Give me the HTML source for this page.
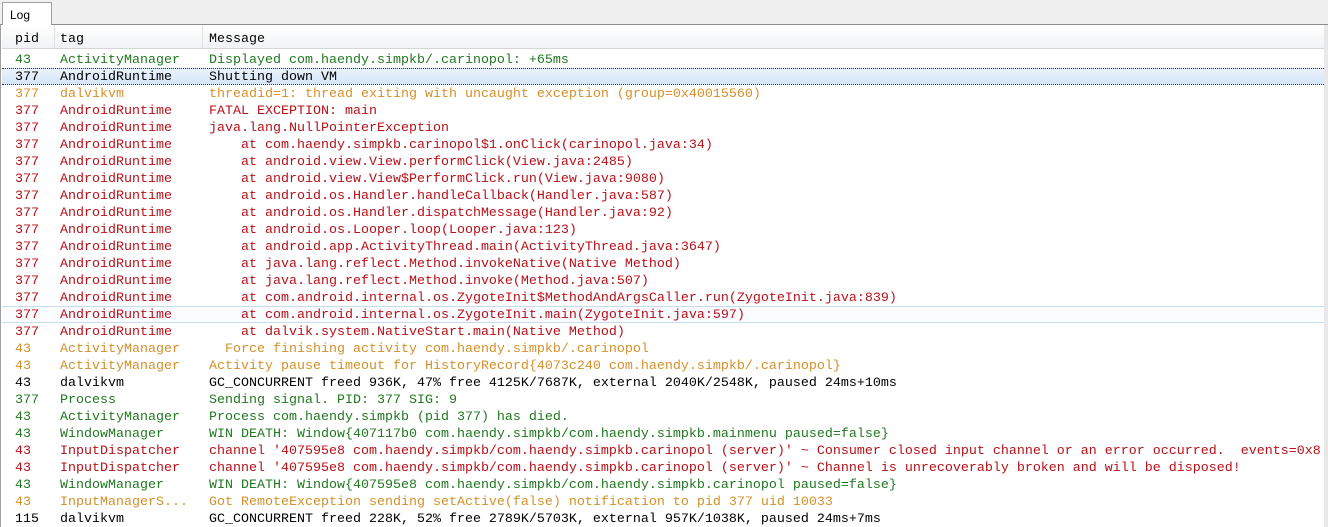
<!DOCTYPE html>
<html><head><style>
body{margin:0;width:1328px;height:527px;overflow:hidden;background:#fff;font-family:"Liberation Mono",monospace;font-size:13.33px;}
.strip{position:absolute;left:0;top:0;width:1328px;height:24px;background:#f0f0f0;border-bottom:1px solid #8c8c8c;}
.tab{position:absolute;left:2px;top:2px;width:50px;height:23px;background:#fff;border:1px solid #a0a0a0;border-bottom:none;font-family:"Liberation Sans",sans-serif;font-size:12px;box-sizing:border-box;padding:5px 0 0 7px;}
.wrap{position:absolute;left:0;top:25px;width:1323px;height:502px;border-left:1px solid #a0a0a0;border-right:1px solid #c8c8c8;}
.sb{position:absolute;left:1324px;top:25px;width:4px;height:502px;background:#e8e8e8;}
.hdr{position:absolute;left:1px;top:0;width:1322px;height:23px;background:linear-gradient(#fff,#f1f2f4);border-bottom:1px solid #d5d5d5;color:#000;}
.hdr span{position:absolute;top:7px;}
.sep{position:absolute;top:0;width:1px;height:23px;background:#e0e0e0;}
.row{position:absolute;left:1px;width:1322px;height:17px;white-space:pre;}
.row span{position:absolute;top:3px;}
.a{left:13px}.b{left:58px}.c{left:207px}
.g{color:#207820}.o{color:#d4902a}.r{color:#b81018}.k{color:#000}
.sel{background:linear-gradient(#eaf2fc,#d6e6f8);border-top:1px dotted #333;border-bottom:1px dotted #333;box-sizing:border-box;}
.hov{border-top:1px solid #c8dcf0;border-bottom:1px solid #c8dcf0;box-sizing:border-box;background:#fafcff;}
</style></head><body>
<div class="strip"><div class="tab">Log</div></div>
<div class="wrap">
<div class="hdr"><span style="left:13px">pid</span><span style="left:58px">tag</span><span style="left:207px">Message</span><div class="sep" style="left:52px"></div><div class="sep" style="left:200px"></div></div>
<div class="row g" style="top:25px"><span class="a">43</span><span class="b">ActivityManager</span><span class="c">Displayed com.haendy.simpkb/.carinopol: +65ms</span></div>
<div class="row k sel" style="top:43px"><span class="a" style="top:1px">377</span><span class="b" style="top:1px">AndroidRuntime</span><span class="c" style="top:1px">Shutting down VM</span></div>
<div class="row o" style="top:59px"><span class="a">377</span><span class="b">dalvikvm</span><span class="c">threadid=1: thread exiting with uncaught exception (group=0x40015560)</span></div>
<div class="row r" style="top:76px"><span class="a">377</span><span class="b">AndroidRuntime</span><span class="c">FATAL EXCEPTION: main</span></div>
<div class="row r" style="top:93px"><span class="a">377</span><span class="b">AndroidRuntime</span><span class="c">java.lang.NullPointerException</span></div>
<div class="row r" style="top:110px"><span class="a">377</span><span class="b">AndroidRuntime</span><span class="c">    at com.haendy.simpkb.carinopol$1.onClick(carinopol.java:34)</span></div>
<div class="row r" style="top:127px"><span class="a">377</span><span class="b">AndroidRuntime</span><span class="c">    at android.view.View.performClick(View.java:2485)</span></div>
<div class="row r" style="top:144px"><span class="a">377</span><span class="b">AndroidRuntime</span><span class="c">    at android.view.View$PerformClick.run(View.java:9080)</span></div>
<div class="row r" style="top:161px"><span class="a">377</span><span class="b">AndroidRuntime</span><span class="c">    at android.os.Handler.handleCallback(Handler.java:587)</span></div>
<div class="row r" style="top:178px"><span class="a">377</span><span class="b">AndroidRuntime</span><span class="c">    at android.os.Handler.dispatchMessage(Handler.java:92)</span></div>
<div class="row r" style="top:195px"><span class="a">377</span><span class="b">AndroidRuntime</span><span class="c">    at android.os.Looper.loop(Looper.java:123)</span></div>
<div class="row r" style="top:212px"><span class="a">377</span><span class="b">AndroidRuntime</span><span class="c">    at android.app.ActivityThread.main(ActivityThread.java:3647)</span></div>
<div class="row r" style="top:229px"><span class="a">377</span><span class="b">AndroidRuntime</span><span class="c">    at java.lang.reflect.Method.invokeNative(Native Method)</span></div>
<div class="row r" style="top:246px"><span class="a">377</span><span class="b">AndroidRuntime</span><span class="c">    at java.lang.reflect.Method.invoke(Method.java:507)</span></div>
<div class="row r" style="top:263px"><span class="a">377</span><span class="b">AndroidRuntime</span><span class="c">    at com.android.internal.os.ZygoteInit$MethodAndArgsCaller.run(ZygoteInit.java:839)</span></div>
<div class="row r hov" style="top:281px"><span class="a" style="top:1px">377</span><span class="b" style="top:1px">AndroidRuntime</span><span class="c" style="top:1px">    at com.android.internal.os.ZygoteInit.main(ZygoteInit.java:597)</span></div>
<div class="row r" style="top:297px"><span class="a">377</span><span class="b">AndroidRuntime</span><span class="c">    at dalvik.system.NativeStart.main(Native Method)</span></div>
<div class="row o" style="top:314px"><span class="a">43</span><span class="b">ActivityManager</span><span class="c">  Force finishing activity com.haendy.simpkb/.carinopol</span></div>
<div class="row o" style="top:331px"><span class="a">43</span><span class="b">ActivityManager</span><span class="c">Activity pause timeout for HistoryRecord{4073c240 com.haendy.simpkb/.carinopol}</span></div>
<div class="row k" style="top:348px"><span class="a">43</span><span class="b">dalvikvm</span><span class="c">GC_CONCURRENT freed 936K, 47% free 4125K/7687K, external 2040K/2548K, paused 24ms+10ms</span></div>
<div class="row g" style="top:365px"><span class="a">377</span><span class="b">Process</span><span class="c">Sending signal. PID: 377 SIG: 9</span></div>
<div class="row g" style="top:382px"><span class="a">43</span><span class="b">ActivityManager</span><span class="c">Process com.haendy.simpkb (pid 377) has died.</span></div>
<div class="row g" style="top:399px"><span class="a">43</span><span class="b">WindowManager</span><span class="c">WIN DEATH: Window{407117b0 com.haendy.simpkb/com.haendy.simpkb.mainmenu paused=false}</span></div>
<div class="row r" style="top:416px"><span class="a">43</span><span class="b">InputDispatcher</span><span class="c">channel '407595e8 com.haendy.simpkb/com.haendy.simpkb.carinopol (server)' ~ Consumer closed input channel or an error occurred.  events=0x8</span></div>
<div class="row r" style="top:433px"><span class="a">43</span><span class="b">InputDispatcher</span><span class="c">channel '407595e8 com.haendy.simpkb/com.haendy.simpkb.carinopol (server)' ~ Channel is unrecoverably broken and will be disposed!</span></div>
<div class="row g" style="top:450px"><span class="a">43</span><span class="b">WindowManager</span><span class="c">WIN DEATH: Window{407595e8 com.haendy.simpkb/com.haendy.simpkb.carinopol paused=false}</span></div>
<div class="row o" style="top:467px"><span class="a">43</span><span class="b">InputManagerS...</span><span class="c">Got RemoteException sending setActive(false) notification to pid 377 uid 10033</span></div>
<div class="row k" style="top:484px"><span class="a">115</span><span class="b">dalvikvm</span><span class="c">GC_CONCURRENT freed 228K, 52% free 2789K/5703K, external 957K/1038K, paused 24ms+7ms</span></div>
</div>
<div class="sb"></div>
</body></html>
